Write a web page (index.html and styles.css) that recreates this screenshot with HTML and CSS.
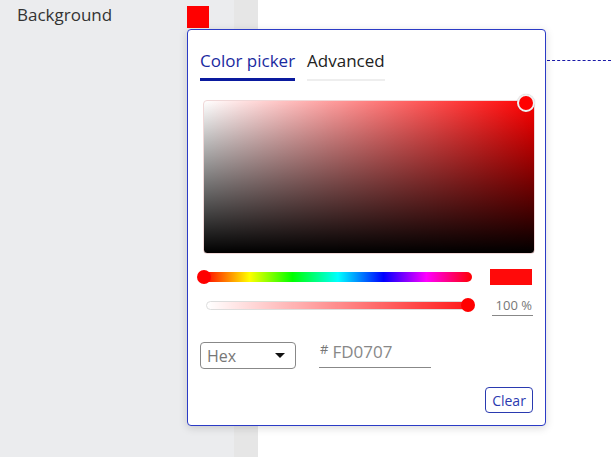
FILE: index.html
```html
<!DOCTYPE html>
<html>
<head>
<meta charset="utf-8">
<link rel="stylesheet" href="styles.css">
</head>
<body>
<div class="page">
  <div class="side">
    <div class="row">
      <span class="label">Background</span>
      <span class="swatch-btn"></span>
    </div>
  </div>
  <div class="strip"></div>
  <div class="main"></div>
</div>
<div class="connector"></div>
<div class="popup">
  <div class="tabs">
    <div class="tab active">Color picker</div>
    <div class="tab">Advanced</div>
  </div>
  <div class="sv">
    <div class="sv-thumb"></div>
  </div>
  <div class="hue-row">
    <div class="hue"><div class="hue-thumb"></div></div>
    <div class="preview"></div>
  </div>
  <div class="alpha-row">
    <div class="alpha"><div class="alpha-thumb"></div></div>
    <div class="alpha-val">100 %</div>
  </div>
  <div class="fmt-row">
    <div class="select"><span>Hex</span><span class="caret"></span></div>
    <div class="hex"><span class="hash">#</span><span class="hexval">FD0707</span></div>
  </div>
  <div class="foot">
    <button class="clear">Clear</button>
  </div>
</div>
</body>
</html>
```
FILE: styles.css
```css
* { box-sizing: border-box; }
html, body { margin: 0; padding: 0; }
body {
  font-family: "Open Sans", "Noto Sans", sans-serif;
  width: 611px;
  height: 457px;
  overflow: hidden;
  position: relative;
  background: #fff;
}
.page { display: flex; height: 457px; }
.side { width: 234px; background: #ebecee; }
.strip { width: 24px; background: #e6e6e6; }
.main { flex: 1; background: #fff; }
.row { display: flex; align-items: flex-start; padding: 6px 0 0 17px; }
.label { font-size: 17px; color: #333; line-height: 20px; margin-top: -1px; width: 170px; }
.swatch-btn { width: 22px; height: 22px; background: #ff0000; }
.connector {
  position: absolute; left: 547px; top: 60px; width: 64px; height: 0;
  border-top: 1px dashed #1a1aa8;
}
.popup {
  position: absolute; left: 187px; top: 29px; width: 359px; height: 397px;
  background: #fff; border: 1px solid #2b3bc6; border-radius: 4px;
  box-shadow: 0 2px 8px rgba(0,0,0,0.15);
  padding: 0 12px 0 12px;
  display: flex; flex-direction: column;
}
.tabs { display: flex; gap: 12px; padding-top: 17px; }
.tab { font-size: 17px; line-height: 28px; color: #222; border-bottom: 2px solid #eee; padding-bottom: 4px; }
.tab.active { color: #1a2aa0; border-bottom: 3px solid #0a1a9e; padding-bottom: 3px; }
.sv {
  position: relative; margin: 19px 0 0 3px; width: 332px; height: 154px;
  border-radius: 4px; border: 1px solid #f0d8d8;
  background: linear-gradient(to top, #000, rgba(0,0,0,0)), linear-gradient(to right, #fff, #ff0000);
}
.sv-thumb {
  position: absolute; right: -1px; top: -7px; width: 18px; height: 18px; border-radius: 50%;
  background: #ff0000; border: 2px solid #f2f2f2; box-shadow: 0 0 1px rgba(0,0,0,0.3);
}
.hue-row { display: flex; align-items: center; margin-top: 15px; padding-left: 4px; }
.hue {
  position: relative; width: 268px; height: 10px; border-radius: 5px;
  background: linear-gradient(to right, #f00 0%, #ff0 17%, #0f0 33%, #0ff 50%, #00f 67%, #f0f 83%, #f00 100%);
}
.hue-thumb {
  position: absolute; left: -7px; top: -2px; width: 14px; height: 14px; border-radius: 50%;
  background: #ff0000;
}
.preview { width: 42px; height: 16px; background: #ff0a0a; margin-left: 18px; }
.alpha-row { display: flex; align-items: flex-start; margin-top: 13px; padding-left: 6px; }
.alpha {
  position: relative; width: 264px; height: 9px; border-radius: 5px; margin-top: 3px;
  border: 1px solid #ddd;
  background: linear-gradient(to right, rgba(255,0,0,0), #ff1a1a);
}
.alpha-thumb {
  position: absolute; right: -7px; top: -4px; width: 14px; height: 14px; border-radius: 50%;
  background: #ff0000;
}
.alpha-val {
  margin-left: 23px; width: 41px; text-align: right; padding-right: 1px;
  font-size: 13px; color: #777; line-height: 15px; border-bottom: 1px solid #888;
  padding-bottom: 2px;
}
.fmt-row { display: flex; align-items: flex-start; margin-top: 26px; }
.select {
  width: 96px; height: 27px; border: 1px solid #888; border-radius: 4px;
  display: flex; align-items: center; justify-content: space-between;
  padding: 0 10px 0 6px; font-size: 16px; color: #777;
}
.caret {
  width: 0; height: 0; border-left: 5px solid transparent; border-right: 5px solid transparent;
  border-top: 5px solid #111;
}
.hex {
  margin-left: 23px; width: 112px; border-bottom: 1px solid #888;
  display: flex; align-items: flex-start; height: 26px;
}
.hash { font-size: 13px; color: #777; margin-right: 4px; line-height: 14px; padding-left: 1px; }
.hexval { font-size: 17px; color: #888; line-height: 20px; margin-top: 0px; }
.foot { display: flex; justify-content: flex-end; margin-top: 18px; padding-right: 0; }
.clear {
  font-family: inherit; width: 48px; height: 26px; border: 1px solid #2a3ab0; border-radius: 4px;
  background: #fff; color: #2a3ab0; font-size: 14px; padding: 0; cursor: pointer;
}
```
